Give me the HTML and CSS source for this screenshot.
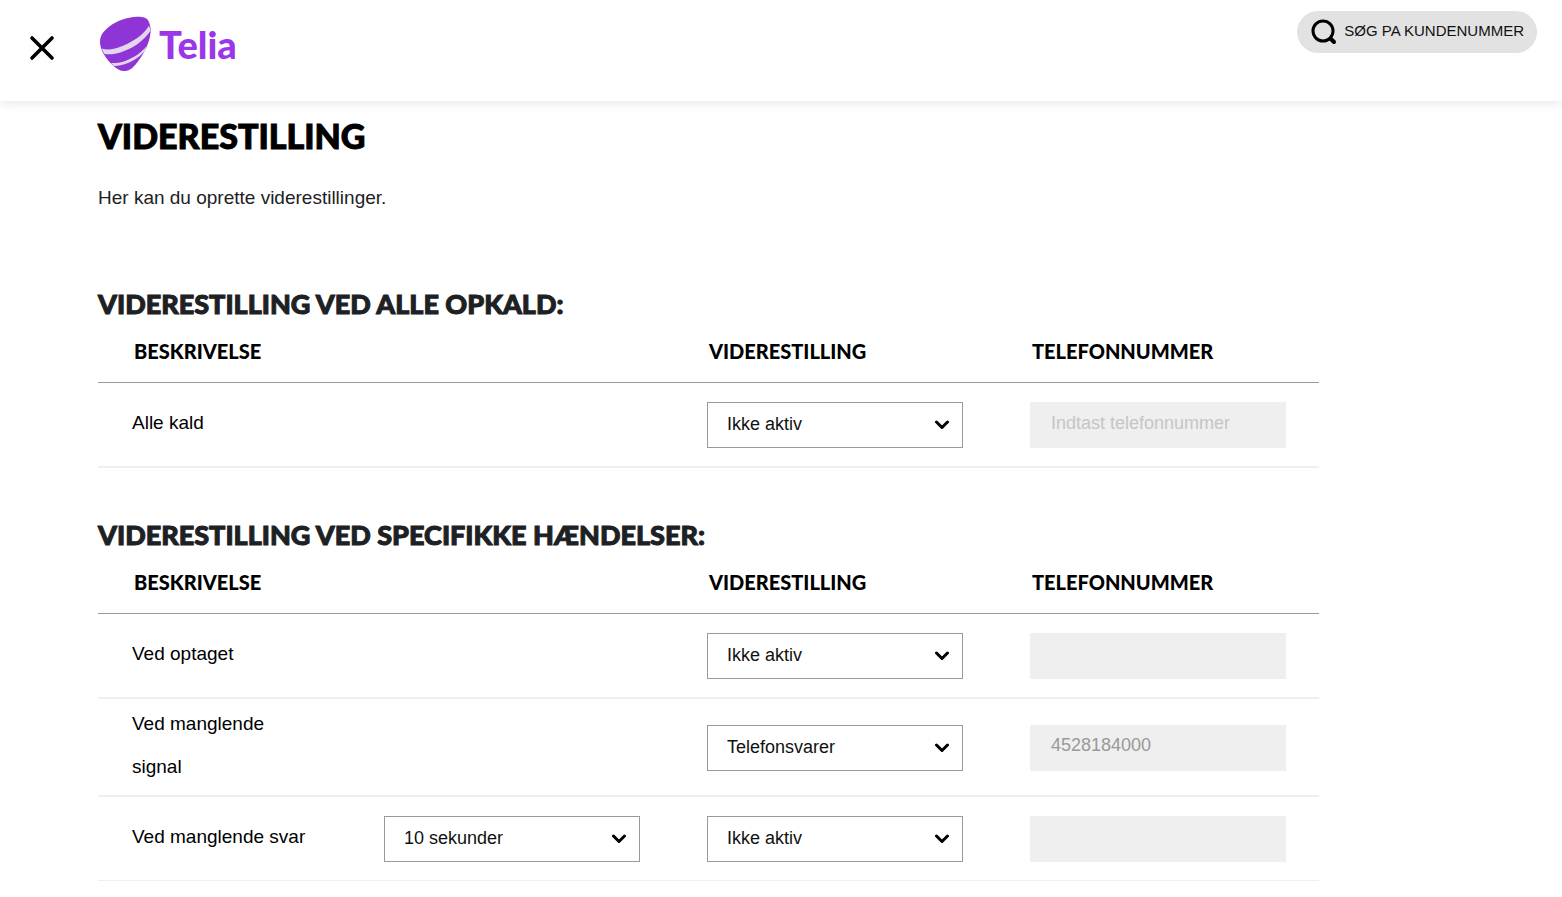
FILE: index.html
```
<!DOCTYPE html>
<html lang="da">
<head>
  <meta charset="UTF-8">
  <meta name="viewport" content="width=device-width, initial-scale=1.0">
  <title>Telia - Viderestilling</title>
  <link rel="stylesheet" href="styles.css">
</head>
<body>
  <header class="header">
    <button class="close-btn" type="button" aria-label="Luk">
      <svg width="26" height="26" viewBox="0 0 26 26">
        <path d="M3 3L23 23M23 3L3 23" fill="none" stroke="#000" stroke-width="3.6" stroke-linecap="round"/>
      </svg>
    </button>
    <a class="logo" href="#">
      <svg width="52" height="56" viewBox="0 0 52 56" aria-hidden="true">
        <path d="M1 26C1 19 5 14.500 11 10C17 5.500 28 1 38 0.800C44 0.700 48 2 49.500 5C51 8 52 12 51.500 17C50.500 26 46 36 40 44C35 51 31 55 26 55C22 55.500 18 53 14 49.500C7 43 1 34 1 26Z" fill="#8f34d5"/>
        <path d="M2.500 32.500C11 35 20 32 28 28C38 23 46 17 50 9.500L51.500 14.500C49 19 44 24 38 28.500C31 33 23 36.500 16 37.800C12 38.500 8 38.500 5.500 38Z" fill="#e3d5ee"/>
        <path d="M12 47C17 47.300 22 46.500 27.500 44.500C36 41 43 36 47.500 30L45.500 35.500C40 41.500 35 44.500 29 47C24 49 20 49.800 15 50Z" fill="#e3d5ee"/>
      </svg>
      <span class="logo-text">Telia</span>
    </a>
    <button class="search-btn" type="button">
      <svg width="26" height="26" viewBox="0 0 26 26" aria-hidden="true">
        <circle cx="12" cy="12" r="10" fill="none" stroke="#000" stroke-width="3"/>
        <path d="M20 20L23 23" stroke="#000" stroke-width="4" stroke-linecap="round"/>
      </svg>
      <span>SØG PA KUNDENUMMER</span>
    </button>
  </header>

  <main class="content">
    <h1>VIDERESTILLING</h1>
    <p class="intro">Her kan du oprette viderestillinger.</p>

    <section class="section">
      <h2>VIDERESTILLING VED ALLE OPKALD:</h2>
      <table class="forward-table">
        <thead>
          <tr>
            <th class="col-desc">BESKRIVELSE</th>
            <th></th>
            <th>VIDERESTILLING</th>
            <th>TELEFONNUMMER</th>
          </tr>
        </thead>
        <tbody>
          <tr>
            <td class="desc">Alle kald</td>
            <td></td>
            <td>
              <select class="select" aria-label="Viderestilling, alle kald">
                <option>Ikke aktiv</option>
                <option>Telefonsvarer</option>
              </select>
            </td>
            <td><input class="phone" type="tel" placeholder="Indtast telefonnummer" aria-label="Telefonnummer, alle kald" disabled></td>
          </tr>
        </tbody>
      </table>
    </section>

    <section class="section">
      <h2>VIDERESTILLING VED SPECIFIKKE HÆNDELSER:</h2>
      <table class="forward-table">
        <thead>
          <tr>
            <th class="col-desc">BESKRIVELSE</th>
            <th></th>
            <th>VIDERESTILLING</th>
            <th>TELEFONNUMMER</th>
          </tr>
        </thead>
        <tbody>
          <tr>
            <td class="desc">Ved optaget</td>
            <td></td>
            <td>
              <select class="select" aria-label="Viderestilling, ved optaget">
                <option>Ikke aktiv</option>
                <option>Telefonsvarer</option>
              </select>
            </td>
            <td><input class="phone" type="tel" aria-label="Telefonnummer, ved optaget" disabled></td>
          </tr>
          <tr>
            <td class="desc">Ved manglende signal</td>
            <td></td>
            <td>
              <select class="select" aria-label="Viderestilling, ved manglende signal">
                <option>Ikke aktiv</option>
                <option selected>Telefonsvarer</option>
              </select>
            </td>
            <td><input class="phone" type="tel" value="4528184000" aria-label="Telefonnummer, ved manglende signal" disabled></td>
          </tr>
          <tr class="last">
            <td class="desc">Ved manglende svar</td>
            <td>
              <select class="select" aria-label="Ventetid, ved manglende svar">
                <option>10 sekunder</option>
                <option>20 sekunder</option>
              </select>
            </td>
            <td>
              <select class="select" aria-label="Viderestilling, ved manglende svar">
                <option>Ikke aktiv</option>
                <option>Telefonsvarer</option>
              </select>
            </td>
            <td><input class="phone" type="tel" aria-label="Telefonnummer, ved manglende svar" disabled></td>
          </tr>
        </tbody>
      </table>
    </section>
  </main>
</body>
</html>
```
FILE: styles.css
```
* {
  box-sizing: border-box;
}

body {
  margin: 0;
  background: #fff;
  color: #000;
  font-family: "Liberation Sans", Arial, sans-serif;
  font-size: 18px;
}

button {
  border: 0;
  padding: 0;
  background: none;
  font-family: inherit;
  cursor: pointer;
}

/* header */
.header {
  display: flex;
  align-items: flex-start;
  height: 101px;
  padding: 11px 25px 0 29px;
  box-shadow: 0 2px 10px rgba(0, 0, 0, 0.1);
}

.close-btn {
  height: 26px;
  margin-top: 24px;
}

.close-btn svg,
.logo svg,
.search-btn svg {
  display: block;
}

.logo {
  display: flex;
  align-items: center;
  gap: 8px;
  margin: 5px auto 0 44px;
  text-decoration: none;
}

.logo-text {
  color: #9b36ea;
  font-family: Lato, sans-serif;
  font-size: 38px;
  font-weight: 900;
  line-height: 56px;
}

.search-btn {
  display: flex;
  align-items: center;
  gap: 7px;
  height: 42px;
  padding: 0 13px 0 14px;
  border-radius: 21px;
  background: #e2e2e2;
  color: #111;
  font-size: 15px;
}

.search-btn span {
  padding-bottom: 4px;
}

/* content */
.content {
  padding: 11px 243px 16px 98px;
}

h1,
h2,
th {
  font-family: Lato, sans-serif;
  font-weight: 900;
}

h1,
h2 {
  -webkit-text-stroke: 1px;
}

h1 {
  margin: 0 0 24px;
  font-size: 34px;
  line-height: 48px;
}

.intro {
  margin: 0 0 74px;
  color: #1d2124;
  font-size: 19px;
  line-height: 28px;
}

.section {
  margin-bottom: 49px;
}

.section:last-child {
  margin-bottom: 0;
}

h2 {
  margin: 0;
  color: #1d2124;
  font-size: 27px;
  line-height: 36px;
}

.forward-table {
  width: 100%;
  table-layout: fixed;
  border-spacing: 0;
}

.forward-table th {
  padding: 15px 0 17px 36px;
  border-bottom: 1px solid #999;
  font-size: 20px;
  line-height: 28px;
  text-align: left;
}

.forward-table .col-desc {
  width: 252px;
}

.forward-table td {
  padding: 19px 33px 18px 34px;
  border-bottom: 2px solid #efefef;
  vertical-align: middle;
}

.forward-table .last td {
  border-bottom-width: 1px;
}

.forward-table .desc {
  padding: 3px 40px 7px 34px;
  font-size: 19px;
  line-height: 43px;
}

.select,
.phone {
  display: block;
  width: 100%;
  height: 46px;
  border-radius: 0;
  font-family: inherit;
  font-size: 18px;
}

.select {
  appearance: none;
  padding: 0 40px 2px 19px;
  border: 1px solid #999;
  background: #fff url("data:image/svg+xml,%3Csvg xmlns='http://www.w3.org/2000/svg' width='16' height='10' viewBox='0 0 16 10'%3E%3Cpath d='M2.500 2L8 7.500L13.500 2' fill='none' stroke='%23000' stroke-width='3' stroke-linecap='round' stroke-linejoin='round'/%3E%3C/svg%3E") no-repeat right 12px center;
  color: #111;
}

.phone {
  padding: 0 20px 4px 21px;
  border: 0;
  background: #efefef;
  color: #999;
}

.phone::placeholder {
  color: #c5c5c5;
}
```
